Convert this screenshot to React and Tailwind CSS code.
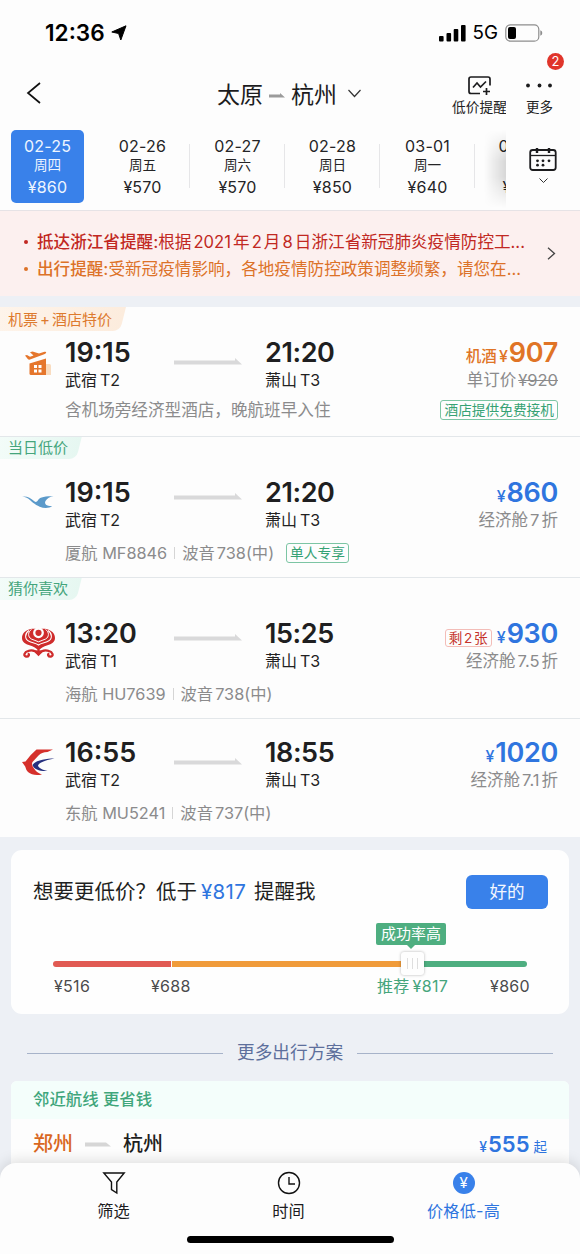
import React from 'react';
import clsx from 'clsx';

const dates = [
  { day: '02-25', week: '周四', price: '¥860', active: true },
  { day: '02-26', week: '周五', price: '¥570', line: true },
  { day: '02-27', week: '周六', price: '¥570', line: true },
  { day: '02-28', week: '周日', price: '¥850', line: true },
  { day: '03-01', week: '周一', price: '¥640', line: true },
  { day: '03-02', week: '周二', price: '¥640' },
];

const LongArrow = () => (
  <svg width="68" height="8" viewBox="0 0 68 8">
    <path d="M0 2.500h61V0l7 6.500H0z" fill="#d9d9da" />
  </svg>
);

const HotelLogo = () => (
  <svg width="28" height="26" viewBox="0 0 28 26">
    <path d="M19 13h5.500q1.500 0 1.500 1.500V24h-7z" fill="#f9dcc0" />
    <path d="M0 4.500l2-.5 3 1.800 3.500-1.200L5 1.200 7.500.6l6.500 2L19.500.8q1.800-.3 1.700.6-.2 1-2 1.800L5 8.600q-1.400.4-2.200-.6z" fill="#e5762c" />
    <path d="M4.500 12.500L21 7.500V24H6q-1.500 0-1.500-1.500z" fill="#e5762c" />
    <path d="M9 14h3v3H9zm4.500 0h3v3h-3zM9 18.500h3v3H9zm4.500 0h3v3h-3z" fill="#fff" />
  </svg>
);

const XiamenLogo = () => (
  <svg width="32" height="14" viewBox="0 0 32 14">
    <path d="M0 1.500c5-.6 8.500 1 12 4.500 1.500 1.200 2.500 1.200 3.500.1C17 2.500 21 1 31.500 1.200 28 1.800 25 3.200 23.500 6c-1.500 2.800.8 5.300 6.700 5.200-3 2-8 2.300-12.500.5C13 10 8.500 5.500 6 3.600 4.300 2.300 2.500 1.700 0 1.500z" fill="#5b9aca" />
  </svg>
);

const HainanLogo = () => (
  <svg width="33" height="30" viewBox="0 0 33 30" fill="none">
    <path d="M10 .8C3.500 1.800 0 5.500 0 10c0 4 3.500 6 7.500 7.200 4 1.200 7 2.800 9 5.800 2-3 5-4.600 9-5.800C29.500 16 33 14 33 10 33 5.500 29.500 1.800 23 .8z" fill="#cf2c2c" />
    <g stroke="#fff">
      <path d="M7 2.500C2.500 5.500 2.500 11 7 13.300c3 1.500 7 1.700 9.500 3.700 2.500-2 6.500-2.200 9.500-3.700 4.500-2.300 4.500-7.800 0-10.800" strokeWidth="1.100" />
      <path d="M9.500 1.500C5.500 4 5.800 9 9.300 11c2.200 1.300 5 1.500 7.200 2.800 2.200-1.300 5-1.500 7.200-2.800 3.500-2 3.800-7-.2-9.500" strokeWidth="1" />
    </g>
    <circle cx="16.500" cy="4.800" r="5.400" fill="#fdfdfd" />
    <circle cx="16.500" cy="4.800" r="3.100" fill="#cf2c2c" />
    <path d="M16.500 26c-3-3.500-7-4.200-10.500-3-3.500 1-5 5-2 5.500 2.800.5 4-2.500 1.700-3M16.500 26c3-3.500 7-4.200 10.500-3 3.500 1 5 5 2 5.500-2.800.5-4-2.500-1.700-3" stroke="#cf2c2c" strokeWidth="2.300" />
    <path d="M11.500 23l5-1 5 1-5 5.300z" fill="#cf2c2c" />
  </svg>
);

const EasternLogo = () => (
  <svg width="33" height="27" viewBox="0 0 33 27">
    <path d="M0 13l3.500-.5Q9 5 14.500.5H31L25.500 3q-6 .3-9 3.500L10.500 13q-1.500 3 1.500 6.500 3 4.500 8 6-9 1.800-14-2.500-2-2-2.800-5.500z" fill="#d5302b" />
    <path d="M32.500 9.500C24 9.500 14 11 10.500 16c1.500 4.500 7.500 6.500 15 6-5-1-9-3-9.500-5.500C17.500 13 25 11 32.500 9.500z" fill="#26317f" />
  </svg>
);

const flights = [
  {
    tag: <>机票<span className="mx-[2px]">+</span>酒店特价</>, tone: 'orange', logo: <HotelLogo />, logoPad: 'pt-[14px] pl-[25px]', arrowPad: 'pt-[21px]',
    body: 'pt-[6px] pb-[14px]', gap: 'mt-[6px]',
    dep: '19:15', from: '武宿 T2', arr: '21:20', to: '萧山 T3',
    prefix: '机酒', price: '907', sub: <>单订价<span className="line-through ml-0.5">¥920</span></>,
    detail: '含机场旁经济型酒店，晚航班早入住', detailSize: 'text-[16.6px]', badge: '酒店提供免费接机', badgeRight: true,
  },
  {
    tag: '当日低价', tone: 'green', logo: <XiamenLogo />, logoPad: 'pt-[18px] pl-[22px]', arrowPad: 'pt-[16px]',
    body: 'pt-[18px] pb-3', gap: 'mt-[9px]',
    dep: '19:15', from: '武宿 T2', arr: '21:20', to: '萧山 T3',
    price: '860', sub: '经济舱7折', detail: '厦航 MF8846', plane: '波音738(中)', badge: '单人专享',
  },
  {
    tag: '猜你喜欢', tone: 'green', logo: <HainanLogo />, logoPad: 'pt-[10px] pl-[22px]', arrowPad: 'pt-[16px]',
    body: 'pt-[18px] pb-3', gap: 'mt-[9px]',
    dep: '13:20', from: '武宿 T1', arr: '15:25', to: '萧山 T3',
    left: '剩2张', price: '930', sub: '经济舱7.5折', detail: '海航 HU7639', plane: '波音738(中)',
  },
  {
    logo: <EasternLogo />, logoPad: 'pt-[12px] pl-[22px]', arrowPad: 'pt-[21px]',
    body: 'pt-[18px] pb-3', gap: 'mt-[9px]',
    dep: '16:55', from: '武宿 T2', arr: '18:55', to: '萧山 T3',
    price: '1020', sub: '经济舱7.1折', detail: '东航 MU5241', plane: '波音737(中)', last: true,
  },
];

const StatusBar = () => (
  <div className="h-[66px] shrink-0 flex items-center pl-[45px] pr-[37px]">
    <span className="text-[22.6px] font-semibold text-black">12:36</span>
    <svg className="ml-1.5" width="16" height="16" viewBox="0 0 16 16">
      <path d="M15 .8L9.800 15 7.600 8.500.8 7z" fill="#000" stroke="#000" strokeLinejoin="round" />
    </svg>
    <div className="ml-auto flex items-center">
      <svg width="27" height="17" viewBox="0 0 27 17">
        <rect x="0" y="11" width="4.600" height="5.500" rx="1" />
        <rect x="7.500" y="8" width="4.600" height="8.500" rx="1" />
        <rect x="14.700" y="4" width="4.600" height="12.500" rx="1" />
        <rect x="22" y="0" width="4.600" height="16.500" rx="1" />
      </svg>
      <span className="ml-[7px] text-[18.8px] text-black">5G</span>
      <svg className="ml-[7px]" width="38" height="18" viewBox="0 0 38 18">
        <rect x=".8" y=".8" width="33" height="16.400" rx="4.500" fill="none" stroke="#8d8d8d" strokeWidth="1.200" />
        <rect x="3" y="3" width="8" height="12" rx="2" />
        <path d="M35.300 6.200q2 .7 2 2.800t-2 2.800z" fill="#8d8d8d" />
      </svg>
    </div>
  </div>
);

const NavBar = () => (
  <div className="h-[64px] shrink-0 flex relative">
    <svg className="mt-4 ml-[26px]" width="16" height="22" viewBox="0 0 16 22" fill="none" stroke="#111" strokeWidth="1.700">
      <path d="M14 1L2 11l12 10" />
    </svg>
    <div className="ml-[175px] mt-[13px] h-8 flex items-center text-[23px] text-[#1c1c1e] font-normal">
      <span>太原</span>
      <svg className="ml-[6px] mt-0.5" width="16" height="6" viewBox="0 0 16 6">
        <path d="M0 1.500h11V0l5 4.500H0z" fill="#9b9b9b" />
      </svg>
      <span className="ml-[6px]">杭州</span>
      <svg className="ml-[11px] -mt-1" width="13" height="9" viewBox="0 0 13 9" fill="none" stroke="#333" strokeWidth="1.200">
        <path d="M.5 1l6 6.500 6-6.500" />
      </svg>
    </div>
    <div className="ml-auto flex">
      <div className="w-[55px] mr-[-1px] flex flex-col items-center pt-[10px]">
        <svg width="23" height="19" viewBox="0 0 23 19" fill="none" stroke="#1c1c1e" strokeWidth="1.700">
          <path d="M12 17.500H3q-2 0-2-2V3q0-2 2-2h17q2 0 2 2v6.500" />
          <path d="M5 11.500l4-4.500 3.500 4L18 5.500M18.500 12v7M15 15.500h7" />
        </svg>
        <span className="text-[13.7px] leading-[18px] mt-[3px] whitespace-nowrap text-[#222]">低价提醒</span>
      </div>
      <div className="w-[74px] pl-[20px] pt-[17px] bg-[#fdfdfd]">
        <svg width="26" height="5" viewBox="0 0 26 5" fill="#1c1c1e">
          <circle cx="2" cy="2.500" r="1.900" />
          <circle cx="13.500" cy="2.500" r="1.900" />
          <circle cx="25" cy="2.500" r="1.900" className="-translate-x-px" />
        </svg>
        <div className="text-[13.5px] leading-[18px] mt-[10px] text-[#222]">更多</div>
      </div>
    </div>
    <span className="absolute right-4 top-[-13px] size-[17px] rounded-full bg-[#e0352b] text-white text-[13px] leading-[17px] text-center">2</span>
  </div>
);

const DateStrip = () => (
  <div className="h-[80px] shrink-0 flex">
    <div className="w-[506px] flex overflow-hidden">
      {dates.map((d) => (
        <div key={d.day} className="w-[95px] shrink-0 relative">
          <div
            className={clsx(
              'w-[73px] h-[73px] mx-auto rounded-[5px] text-center pt-[6px]',
              d.active ? 'bg-[#3981ea] text-[#eef5ff]' : 'text-[#242426]'
            )}
          >
            <div className="text-[16px] leading-5 tracking-[0.2px]">{d.day}</div>
            <div className="text-[13.6px] leading-[18px]">{d.week}</div>
            <div className="text-[16px] leading-5 mt-[3px] tracking-[0.2px]">{d.price}</div>
          </div>
          {d.line && <div className="absolute right-0 top-[14px] h-[44px] w-px bg-[#e6e6e8]" />}
        </div>
      ))}
    </div>
    <div className="w-[74px] relative flex flex-col items-center pt-4 bg-[#fdfdfd]">
      <div className="absolute left-[-22px] top-0 w-[22px] h-[78px] bg-linear-to-r from-transparent to-black/15 mask-y-from-60%" />
      <svg width="28" height="26" viewBox="0 0 28 26" fill="none" stroke="#1c1c1e" strokeWidth="1.800">
        <rect x="1.200" y="4" width="25.500" height="20" rx="2.500" />
        <path d="M1 9.500h26" strokeWidth="1.300" />
        <path d="M8 2v5M20 2v5" strokeWidth="2.400" />
        <g fill="#1c1c1e" stroke="none">
          <circle cx="8.500" cy="14.800" r="1.400" />
          <circle cx="14" cy="14.800" r="1.400" />
          <circle cx="20" cy="14.800" r="1.400" />
          <circle cx="8.500" cy="19.200" r="1.400" />
          <circle cx="14" cy="19.200" r="1.400" />
        </g>
      </svg>
      <svg className="mt-1.5" width="9" height="6" viewBox="0 0 9 6" fill="none" stroke="#333">
        <path d="M.5.5l4 4 4-4" />
      </svg>
    </div>
  </div>
);

const Notice = () => (
  <div className="h-[86px] shrink-0 flex items-center bg-[#fcf0ef] border-t border-[#e6e3e6] pl-[24px] pr-6 text-[16.6px] leading-[26.5px]">
    <div className="pt-1">
      <div className="flex items-center text-[#c12822] whitespace-nowrap">
        <span className="mr-[9px] size-1 rounded-full bg-current" />
        <span><b className="font-medium">抵达浙江省提醒:</b>根据2021年2月8日浙江省新冠肺炎疫情防控工...</span>
      </div>
      <div className="flex items-center text-[#dc7228] whitespace-nowrap">
        <span className="mr-[9px] size-1 rounded-full bg-current" />
        <span><b className="font-medium">出行提醒:</b>受新冠疫情影响，各地疫情防控政策调整频繁，请您在...</span>
      </div>
    </div>
    <svg className="ml-auto" width="9" height="13" viewBox="0 0 9 13" fill="none" stroke="#444" strokeWidth="1.300">
      <path d="M1 .8l6.500 5.700L1 12.200" />
    </svg>
  </div>
);

const Tag = ({ text, tone }) => (
  <div className={clsx('relative w-fit pl-2', tone === 'orange' ? 'h-6 pr-[14px] text-[#dd7a2e]' : 'h-[22px] pr-[14px] text-[#45a57c]')}>
    <div
      className={clsx(
        'absolute inset-y-0 -left-4 right-[3px] -skew-x-[14deg] rounded-br-[7px] bg-linear-to-r',
        tone === 'orange' ? 'from-[#fef5ec] to-[#fcecdd]' : 'from-[#f5fdfa] to-[#e6f7f1]'
      )}
    />
    <span className={clsx('relative block text-[15px]', tone === 'orange' ? 'leading-[25px]' : 'leading-[21px]')}>{text}</span>
  </div>
);

const Badge = ({ children }) => (
  <span className="h-5 px-[3px] rounded-[3px] border border-[#7cc5a4] text-[#36a274] text-[13.7px] leading-[18px] whitespace-nowrap">
    {children}
  </span>
);

const Flight = ({ f }) => (
  <div className={clsx('shrink-0 bg-[#fdfdfd]', !f.last && 'border-b border-[#e3e7ea]')}>
    {f.tag && <Tag text={f.tag} tone={f.tone} />}
    <div className={f.body}>
      <div className="flex h-[55px]">
        <div className={clsx('w-[65px] shrink-0', f.logoPad)}>{f.logo}</div>
        <div className="w-[109px]">
          <div className="text-[27px] leading-[31px] font-semibold text-[#1f1f21]">{f.dep}</div>
          <div className="text-[16px] leading-6 text-[#222] [word-spacing:-1.5px]">{f.from}</div>
        </div>
        <div className={clsx('w-[91px]', f.arrowPad)}><LongArrow /></div>
        <div>
          <div className="text-[27px] leading-[31px] font-semibold text-[#1f1f21] tracking-[-0.4px]">{f.arr}</div>
          <div className="text-[16px] leading-6 text-[#222] [word-spacing:-1.5px]">{f.to}</div>
        </div>
        <div className="ml-auto pr-[22px] text-right">
          <div className={clsx('h-[31px] leading-[31px] flex items-baseline justify-end font-semibold', f.prefix ? 'text-[#e07426]' : 'text-[#2f75df]')}>
            {f.prefix && <span className="text-[15.5px] font-medium mr-0.5">{f.prefix}</span>}
            {f.left && (
              <span className="mr-[5px] h-[18px] px-[3px] rounded-[3px] border border-[#f3bdb8] text-[#c5332b] text-[13.6px] leading-4 font-normal">
                {f.left}
              </span>
            )}
            <span className="text-[16px] font-medium mr-px">¥</span>
            <span className="text-[27px] tracking-[-0.3px]">{f.price}</span>
          </div>
          <div className="text-[16.5px] leading-6 text-[#8b8b8c]">{f.sub}</div>
        </div>
      </div>
      <div className={clsx('h-6 flex items-center pl-[65px] pr-[22px] text-[#8b8b8c]', f.detailSize || 'text-[16.3px]', f.gap)}>
        <span>{f.detail}</span>
        {f.plane && (
          <>
            <span className="w-px h-3 bg-[#d5d5d5] mx-[7px]" />
            <span>{f.plane}</span>
          </>
        )}
        {f.badge && <span className={clsx('flex', f.badgeRight ? 'ml-auto' : 'ml-3')}><Badge>{f.badge}</Badge></span>}
      </div>
    </div>
  </div>
);

const PriceAlert = () => (
  <div className="mt-[13px] mx-[11px] h-[164px] shrink-0 rounded-[11px] bg-[#fefefe] pt-[25px]">
    <div className="flex items-center h-[34px] pl-[22px] pr-[21px] text-[20.5px] text-[#1f1f21]">
      <span>想要更低价？低于</span>
      <span className="text-[#2f75df] ml-1 mr-1.5 tracking-[0.3px]">¥817</span>
      <span className="ml-[2px]">提醒我</span>
      <button className="ml-auto w-[82px] h-[34px] rounded-md bg-[#3981ea] text-[#f2f7ff] text-[17.6px]">好的</button>
    </div>
    <div className="relative mx-[42px] mt-[52px] h-[6px] flex gap-px">
      <div className="w-[118px] bg-[#e15a53] rounded-l-full" />
      <div className="w-[241px] bg-[#f09b3a]" />
      <div className="flex-1 -ml-px bg-[#4eae80] rounded-r-full" />
      <div className="absolute left-[323px] top-[-38px] w-[70px] h-[22px] rounded-[2px] bg-[#4eae80] text-white text-[15px] leading-[22px] text-center">
        成功率高
        <div className="absolute left-[31px] top-[22px] border-x-4 border-x-transparent border-t-4 border-t-[#4eae80]" />
      </div>
      <div className="absolute left-[348px] top-[-9px] w-[23px] h-[23px] rounded-[3px] bg-[#fefefe] shadow-[0_0_3px_rgba(0,0,0,0.3)] flex items-center justify-center gap-1">
        <i className="w-px h-[11px] bg-[#dedede]" />
        <i className="w-px h-[11px] bg-[#dedede]" />
        <i className="w-px h-[11px] bg-[#dedede]" />
      </div>
    </div>
    <div className="flex pl-[43px] pr-[39px] mt-[9px] leading-5 text-[16px] text-[#4b4b4c] tracking-[0.3px]">
      <span className="w-[97px]">¥516</span>
      <span className="w-[226px]">¥688</span>
      <span className="text-[#45a57c] whitespace-nowrap">推荐<span className="ml-[3px]">¥817</span></span>
      <span className="ml-auto">¥860</span>
    </div>
  </div>
);

const NearbyRoute = () => (
  <div className="mx-[11px] mt-[16px] h-[110px] shrink-0 rounded-t-md bg-[#fdfdfd] overflow-hidden">
    <div className="h-[38px] pl-[22px] bg-[#f4fefb] text-[#3fa67b] text-[16.4px] leading-[37px] font-medium">邻近航线 更省钱</div>
    <div className="h-[50px] flex items-center pl-[22px] pr-[22px] text-[20px] text-[#1f1f21]">
      <span className="text-[#d9671f] font-medium">郑州</span>
      <svg className="ml-3" width="26" height="5" viewBox="0 0 26 5">
        <path d="M0 .5h21l5 4H0z" fill="#d6d6d6" />
      </svg>
      <span className="ml-3 font-medium">杭州</span>
      <span className="ml-auto text-[#2f75df] flex items-baseline pt-px">
        <span className="text-[14px] font-medium mr-px">¥</span>
        <span className="text-[22px] font-semibold">555</span>
        <span className="ml-1 text-[13.5px]">起</span>
      </span>
    </div>
  </div>
);

const TabBar = () => (
  <div className="relative z-10 h-[91px] shrink-0 -mt-5 rounded-t-[16px] bg-[#fdfdfd] shadow-[0_-2px_14px_rgba(0,0,0,0.13)]">
    <div className="flex pl-[26px] pr-[29px] pt-2 text-[16.2px] leading-6 text-[#1c1c1e] text-center">
      <div className="w-[175px] flex flex-col items-center">
        <svg width="24" height="24" viewBox="0 0 24 24" fill="none" stroke="#111" strokeWidth="1.400">
          <path d="M1.800 2h20.400l-7.400 9v11l-5.300-3.500V11z" />
        </svg>
        <span className="mt-1">筛选</span>
      </div>
      <div className="w-[175px] flex flex-col items-center">
        <svg width="24" height="24" viewBox="0 0 24 24" fill="none" stroke="#111" strokeWidth="1.400">
          <circle cx="12" cy="12" r="10.500" />
          <path d="M12 6v7h6" />
        </svg>
        <span className="mt-1">时间</span>
      </div>
      <div className="w-[175px] flex flex-col items-center text-[#2f75df]">
        <span className="size-[22px] my-px rounded-full bg-[#3981ea] text-white text-[15px] leading-[22px]">¥</span>
        <span className="mt-1 tracking-[0.2px]">价格低-高</span>
      </div>
    </div>
    <div className="mx-auto mt-[13px] w-[207px] h-[7px] rounded-full bg-black" />
  </div>
);

const App = () => {
  return (
    <div className="w-[580px] h-[1254px] overflow-hidden flex flex-col bg-[#fdfdfd] font-['Inter','Noto_Sans_CJK_SC',sans-serif] [text-autospace:normal]">
      <StatusBar />
      <NavBar />
      <DateStrip />
      <Notice />
      <div className="flex-1 min-h-0 flex flex-col overflow-hidden bg-[#edf0f5]">
        <div className="h-[11px] shrink-0" />
        {flights.map((f) => <Flight key={f.dep + f.price} f={f} />)}
        <PriceAlert />
        <div className="mt-[27px] h-6 shrink-0 flex items-center px-[27px] text-[17.7px] text-[#5d6f9c]">
          <div className="flex-1 h-px bg-[#a7b3c9]" />
          <span className="mx-[14px]">更多出行方案</span>
          <div className="flex-1 h-px bg-[#a7b3c9]" />
        </div>
        <NearbyRoute />
      </div>
      <TabBar />
    </div>
  );
};

export default App;
